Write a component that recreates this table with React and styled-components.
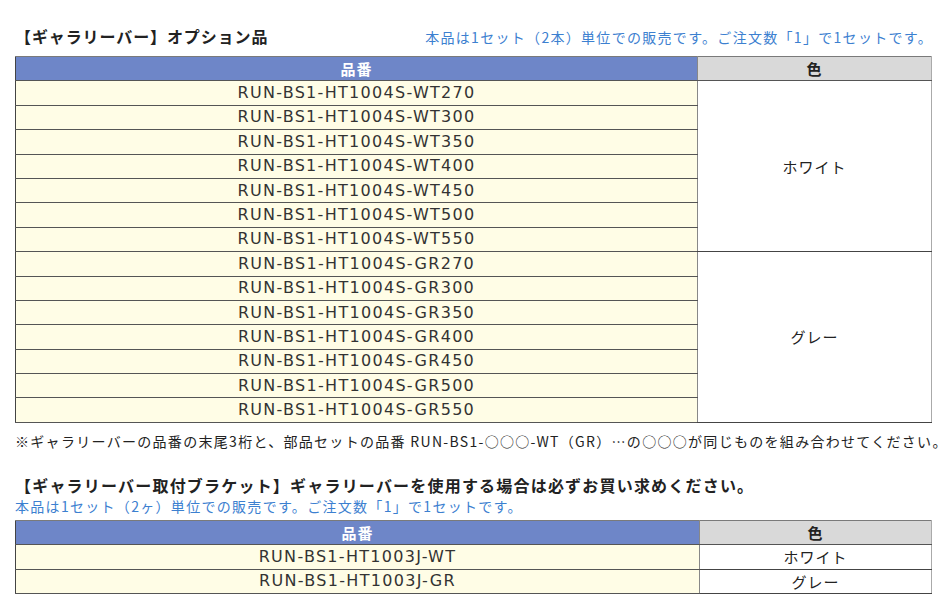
import React from "react";
import styled, { createGlobalStyle } from "styled-components";

const GlobalStyle = createGlobalStyle`
  html, body {
    margin: 0;
    padding: 0;
    background: #ffffff;
  }
  body {
    font-family: "Noto Sans CJK JP", "Noto Sans", sans-serif;
    color: #333333;
  }
`;

const Page = styled.div`
  width: 950px;
  height: 612px;
  overflow: hidden;
  padding: 0 0 0 15px;
  box-sizing: border-box;
`;

const HeadLine = styled.div`
  display: flex;
  align-items: baseline;
  justify-content: space-between;
  width: 917px;
  padding-top: ${(p) => p.$top || 0}px;
`;

const Title = styled.h2`
  margin: 0;
  font-size: 16px;
  font-weight: 700;
  color: #222222;
  line-height: 22px;
  letter-spacing: ${(p) => p.$spacing || 0.9}px;
  white-space: nowrap;
`;

const BlueNote = styled.p`
  margin: 0 -1px 0 0;
  font-size: 14px;
  line-height: 20px;
  color: #3c80d0;
  letter-spacing: 1.3px;
  white-space: nowrap;
`;

const Note = styled.p`
  margin: 0;
  padding-top: ${(p) => p.$top || 0}px;
  font-size: 14px;
  line-height: 20px;
  color: #222222;
  white-space: nowrap;
  letter-spacing: 1.3px;
`;

const Table = styled.table`
  width: 917px;
  border-collapse: collapse;
  margin-top: ${(p) => p.$top || 0}px;
  table-layout: fixed;
`;

const Th = styled.th`
  height: 23.4px;
  padding: 0;
  font-size: 15px;
  font-weight: 700;
  text-align: center;
  border-top: 1px solid #7a7a7a;
  border-bottom: 1px solid #555555;
  color: ${(p) => (p.$blue ? "#ffffff" : "#222222")};
  background: ${(p) => (p.$blue ? "#6e86c8" : "#d9d9d9")};
  border-left: 1px solid ${(p) => (p.$blue ? "#444444" : "#888888")};
  border-right: 1px solid ${(p) => (p.$blue ? "#888888" : "#aaaaaa")};
  line-height: 1;
  letter-spacing: 1px;
`;

const CodeCell = styled.td`
  height: 23.4px;
  padding: 0;
  background: #fffde6;
  text-align: center;
  font-family: "DejaVu Sans", sans-serif;
  font-size: 16px;
  letter-spacing: 1.3px;
  color: #333333;
  border-left: 1px solid #444444;
  border-right: 1px solid #888888;
  border-bottom: 1px solid #555555;
  line-height: 1;
`;

const ColorCell = styled.td`
  padding: 0;
  background: #ffffff;
  text-align: center;
  font-size: 15px;
  letter-spacing: 1px;
  color: #222222;
  border-right: 1px solid #aaaaaa;
  border-bottom: 1px solid #444444;
  line-height: 1;
`;

const sizes = ["270", "300", "350", "400", "450", "500", "550"];
const groups = [
  { code: "WT", name: "ホワイト" },
  { code: "GR", name: "グレー" },
];

const brackets = [
  { code: "RUN-BS1-HT1003J-WT", name: "ホワイト" },
  { code: "RUN-BS1-HT1003J-GR", name: "グレー" },
];

const App = () => (
  <Page>
    <GlobalStyle />
    <HeadLine $top={25}>
      <Title>【ギャラリーバー】オプション品</Title>
      <BlueNote>本品は1セット（2本）単位での販売です。ご注文数「1」で1セットです。</BlueNote>
    </HeadLine>
    <Table $top={9}>
      <colgroup>
        <col style={{ width: "682px" }} />
        <col />
      </colgroup>
      <thead>
        <tr>
          <Th $blue>品番</Th>
          <Th>色</Th>
        </tr>
      </thead>
      <tbody>
        {groups.map((g) =>
          sizes.map((s, i) => (
            <tr key={g.code + s}>
              <CodeCell>{`RUN-BS1-HT1004S-${g.code}${s}`}</CodeCell>
              {i === 0 && <ColorCell rowSpan={sizes.length}>{g.name}</ColorCell>}
            </tr>
          ))
        )}
      </tbody>
    </Table>
    <Note $top={8}>
      ※ギャラリーバーの品番の末尾3桁と、部品セットの品番 RUN-BS1-○○○-WT（GR）…の○○○が同じものを組み合わせてください。
    </Note>
    <HeadLine $top={23}>
      <Title $spacing={1.2}>【ギャラリーバー取付ブラケット】ギャラリーバーを使用する場合は必ずお買い求めください。</Title>
    </HeadLine>
    <BlueNote>本品は1セット（2ヶ）単位での販売です。ご注文数「1」で1セットです。</BlueNote>
    <Table $top={4}>
      <colgroup>
        <col style={{ width: "684px" }} />
        <col />
      </colgroup>
      <thead>
        <tr>
          <Th $blue>品番</Th>
          <Th>色</Th>
        </tr>
      </thead>
      <tbody>
        {brackets.map((b) => (
          <tr key={b.code}>
            <CodeCell>{b.code}</CodeCell>
            <ColorCell>{b.name}</ColorCell>
          </tr>
        ))}
      </tbody>
    </Table>
  </Page>
);

export default App;
